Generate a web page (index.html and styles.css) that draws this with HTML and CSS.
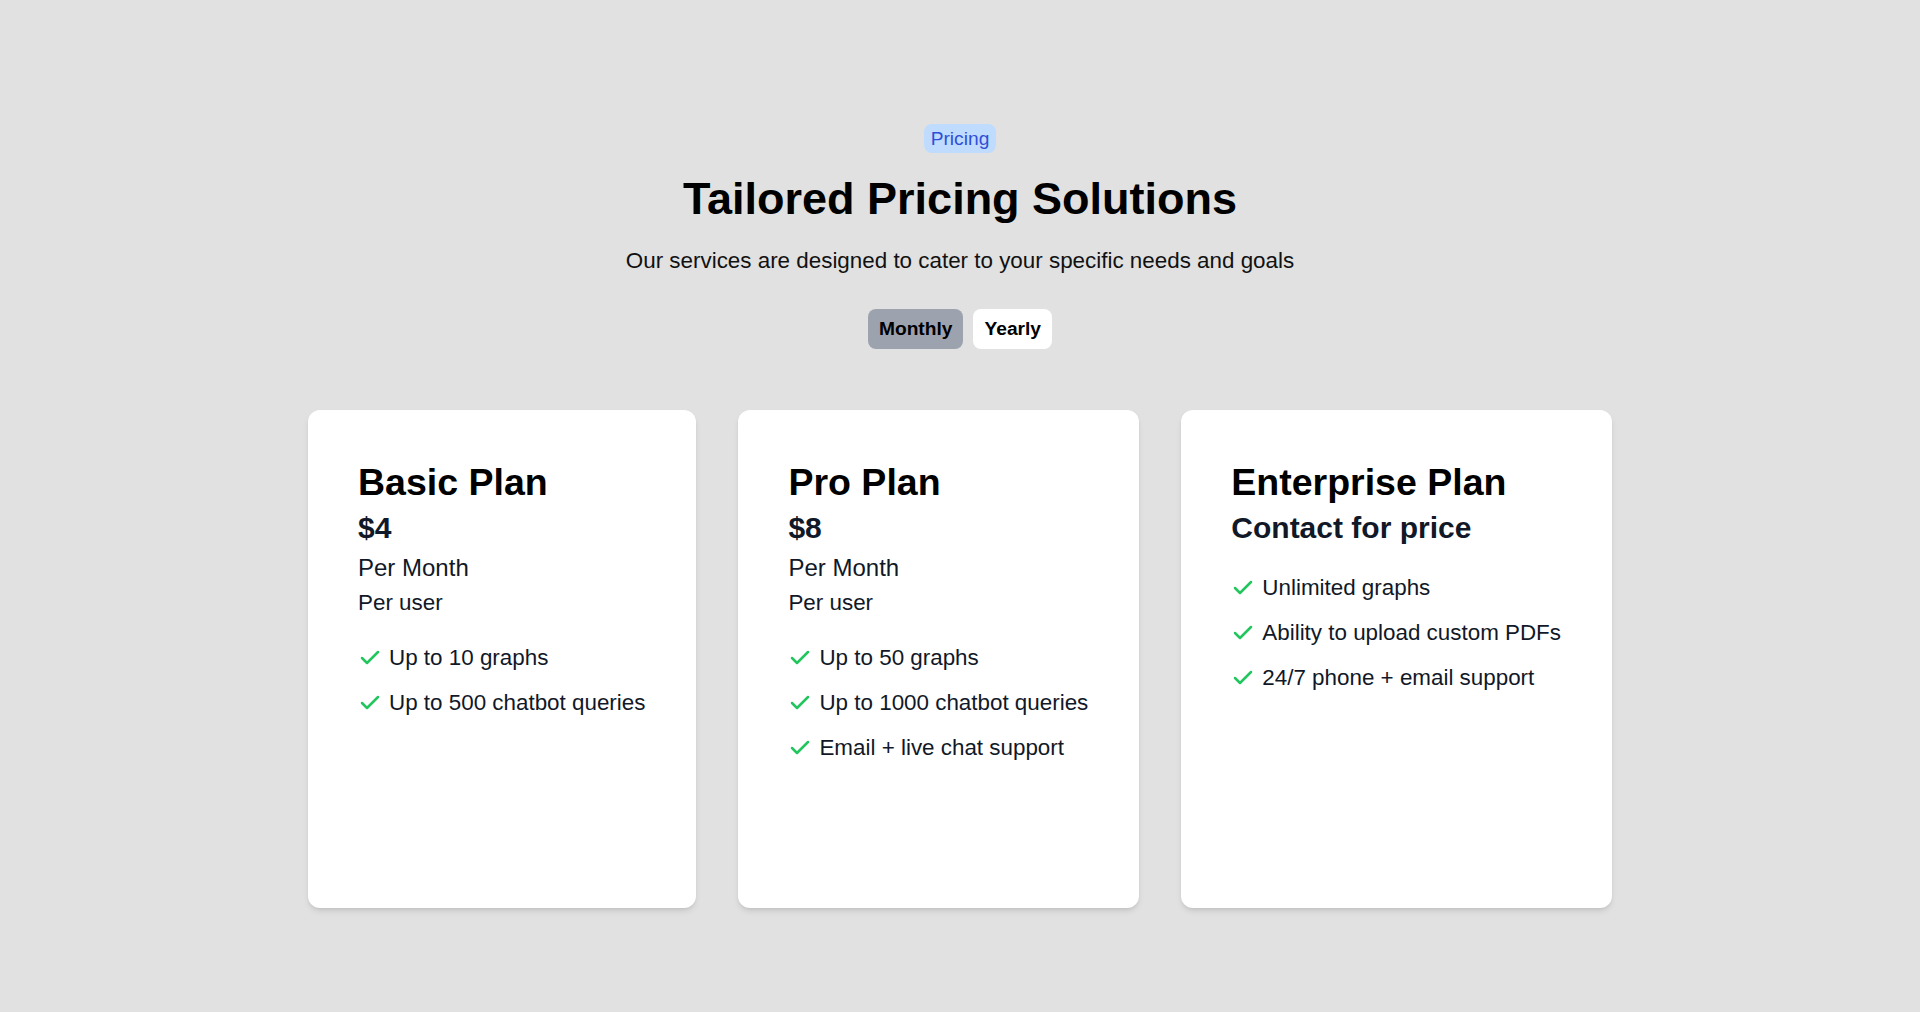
FILE: index.html
```html
<!DOCTYPE html>
<html lang="en">
<head>
<meta charset="utf-8">
<title>Pricing</title>
<link rel="stylesheet" href="styles.css">
</head>
<body>
<main class="pricing">
  <header class="intro">
    <span class="badge">Pricing</span>
    <h1 class="headline">Tailored Pricing Solutions</h1>
    <p class="lead">Our services are designed to cater to your specific needs and goals</p>
    <div class="toggle">
      <button class="toggle-btn is-active">Monthly</button>
      <button class="toggle-btn">Yearly</button>
    </div>
  </header>

  <section class="plans">
    <article class="plan">
      <h2 class="plan-name">Basic Plan</h2>
      <p class="plan-price">$4</p>
      <p class="plan-period">Per Month</p>
      <p class="plan-unit">Per user</p>
      <ul class="features">
        <li class="feature"><svg class="check" viewBox="0 0 24 24"><path d="M20 6 9 17l-5-5"/></svg><span>Up to 10 graphs</span></li>
        <li class="feature"><svg class="check" viewBox="0 0 24 24"><path d="M20 6 9 17l-5-5"/></svg><span>Up to 500 chatbot queries</span></li>
      </ul>
    </article>

    <article class="plan">
      <h2 class="plan-name">Pro Plan</h2>
      <p class="plan-price">$8</p>
      <p class="plan-period">Per Month</p>
      <p class="plan-unit">Per user</p>
      <ul class="features">
        <li class="feature"><svg class="check" viewBox="0 0 24 24"><path d="M20 6 9 17l-5-5"/></svg><span>Up to 50 graphs</span></li>
        <li class="feature"><svg class="check" viewBox="0 0 24 24"><path d="M20 6 9 17l-5-5"/></svg><span>Up to 1000 chatbot queries</span></li>
        <li class="feature"><svg class="check" viewBox="0 0 24 24"><path d="M20 6 9 17l-5-5"/></svg><span>Email + live chat support</span></li>
      </ul>
    </article>

    <article class="plan">
      <h2 class="plan-name">Enterprise Plan</h2>
      <p class="plan-price">Contact for price</p>
      <ul class="features">
        <li class="feature"><svg class="check" viewBox="0 0 24 24"><path d="M20 6 9 17l-5-5"/></svg><span>Unlimited graphs</span></li>
        <li class="feature"><svg class="check" viewBox="0 0 24 24"><path d="M20 6 9 17l-5-5"/></svg><span>Ability to upload custom PDFs</span></li>
        <li class="feature"><svg class="check" viewBox="0 0 24 24"><path d="M20 6 9 17l-5-5"/></svg><span>24/7 phone + email support</span></li>
      </ul>
    </article>
  </section>
</main>
</body>
</html>
```

FILE: styles.css
```css
* { box-sizing: border-box; }

html, body {
  margin: 0;
  padding: 0;
}

body {
  background: #e1e1e1;
  font-family: "Liberation Sans", Arial, Helvetica, sans-serif;
  color: #000;
  min-height: 1012px;
}

.pricing {
  display: flex;
  flex-direction: column;
  align-items: center;
  padding-top: 124px;
}

.intro {
  display: flex;
  flex-direction: column;
  align-items: center;
}

.badge {
  display: inline-block;
  background: #bfdbfe;
  color: #2f4fd6;
  font-size: 19.2px;
  line-height: 29px;
  height: 29px;
  padding: 0 6.5px;
  border-radius: 8px;
}

.headline {
  margin: 19px 0 0;
  font-size: 45px;
  line-height: 53px;
  font-weight: 700;
  color: #000;
}

.lead {
  margin: 20px 0 0;
  font-size: 22.4px;
  line-height: 32px;
  color: #111;
}

.toggle {
  display: flex;
  gap: 10px;
  margin-top: 32px;
}

.toggle-btn {
  font-family: inherit;
  font-size: 19.2px;
  font-weight: 700;
  line-height: 40px;
  height: 40px;
  padding: 0 11px;
  border: none;
  border-radius: 8px;
  background: #fff;
  color: #000;
  cursor: pointer;
}

.toggle-btn.is-active {
  background: #9ca3af;
}

.plans {
  display: flex;
  gap: 42px;
  margin-top: 61px;
  align-items: stretch;
}

.plan {
  background: #fff;
  border-radius: 12px;
  height: 498px;
  padding: 48px 51px 48px 50px;
  box-shadow: 0 4px 6px -1px rgba(0, 0, 0, 0.1), 0 2px 4px -2px rgba(0, 0, 0, 0.1);
}

.plan-name {
  margin: 0;
  font-size: 37.5px;
  line-height: 48px;
  font-weight: 700;
  color: #000;
}

.plan-price {
  margin: 4px 0 0;
  font-size: 30px;
  line-height: 36px;
  font-weight: 700;
  color: #111827;
}

.plan-period {
  margin: 6px 0 0;
  font-size: 24px;
  line-height: 32px;
  color: #111827;
}

.plan-unit {
  margin: 3px 0 0;
  font-size: 22.4px;
  line-height: 32px;
  color: #111827;
}

.features {
  list-style: none;
  margin: 22px 0 0;
  padding: 0;
  display: flex;
  flex-direction: column;
  gap: 12px;
}

.plan-price + .features {
  margin-top: 25px;
}

.feature {
  display: flex;
  align-items: center;
  gap: 7px;
  font-size: 22.4px;
  line-height: 33px;
  color: #111827;
  white-space: nowrap;
}

.check {
  width: 24px;
  height: 24px;
  flex-shrink: 0;
  fill: none;
  stroke: #22c55e;
  stroke-width: 2.5;
  stroke-linecap: round;
  stroke-linejoin: round;
}
```
